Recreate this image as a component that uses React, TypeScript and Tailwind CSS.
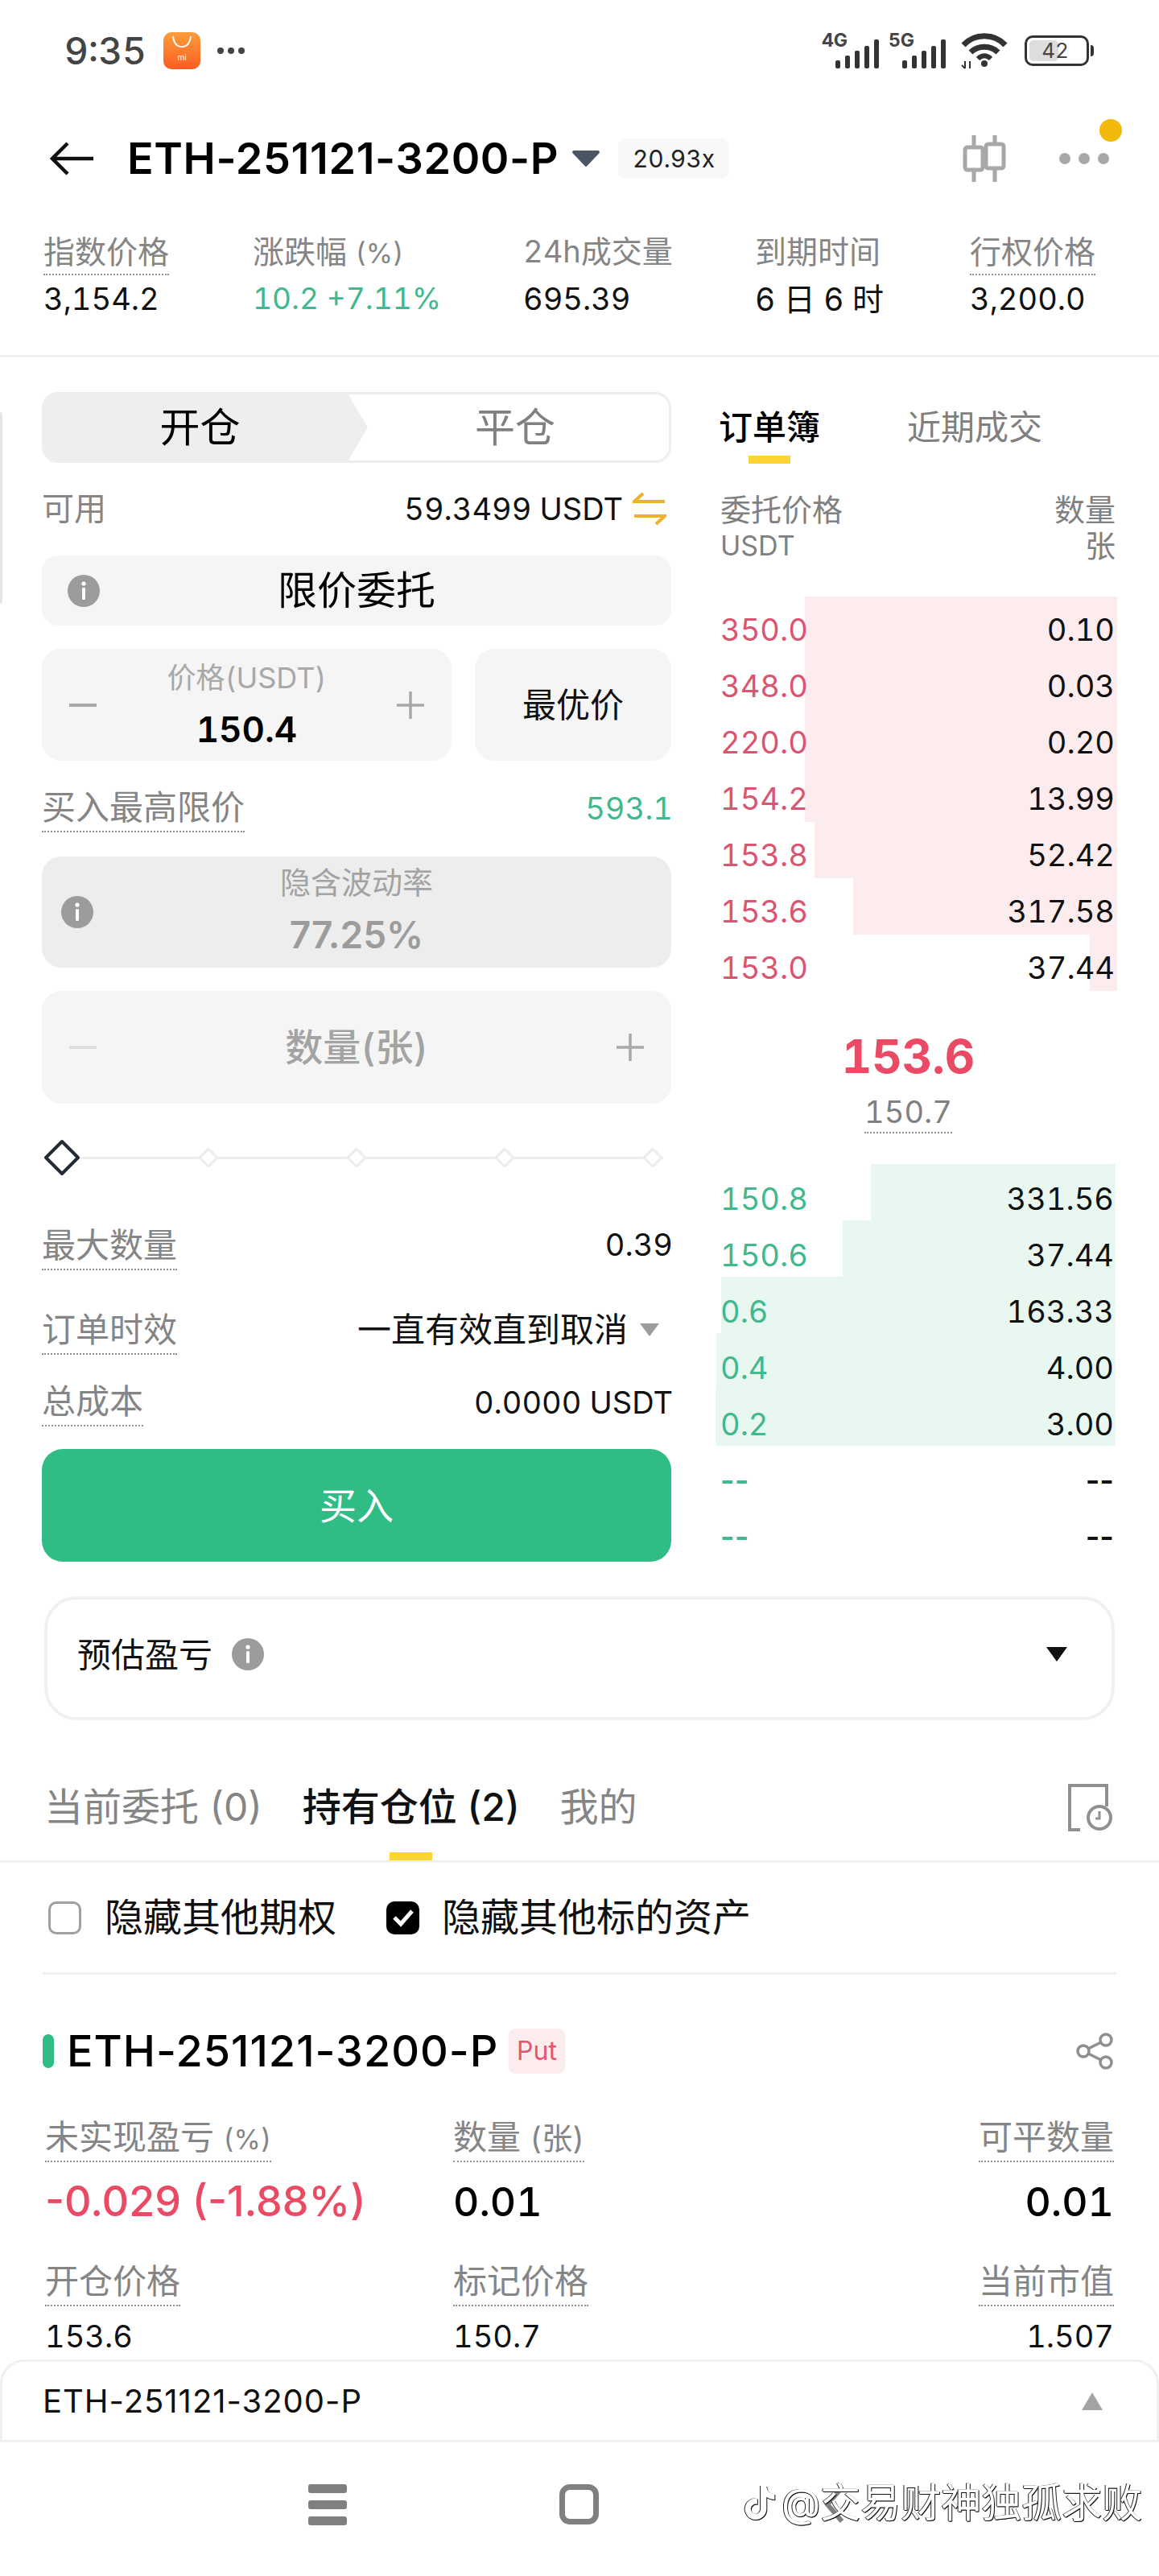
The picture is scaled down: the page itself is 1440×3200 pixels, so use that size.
import React from "react";
import { FaTiktok } from "react-icons/fa";

const asks = [
  { price: "350.0", qty: "0.10", bar: 388 },
  { price: "348.0", qty: "0.03", bar: 388 },
  { price: "220.0", qty: "0.20", bar: 388 },
  { price: "154.2", qty: "13.99", bar: 388 },
  { price: "153.8", qty: "52.42", bar: 376 },
  { price: "153.6", qty: "317.58", bar: 328 },
  { price: "153.0", qty: "37.44", bar: 34 },
];

const bids = [
  { price: "150.8", qty: "331.56", bar: 304 },
  { price: "150.6", qty: "37.44", bar: 339 },
  { price: "0.6", qty: "163.33", bar: 490 },
  { price: "0.4", qty: "4.00", bar: 496 },
  { price: "0.2", qty: "3.00", bar: 497 },
  { price: "--", qty: "--", bar: 0 },
  { price: "--", qty: "--", bar: 0 },
];

const DottedLabel = ({ text, size = "text-[42px]" }: { text: React.ReactNode; size?: string }) => (
  <span className={`inline-block ${size} leading-none pb-[8px] text-[#858585] border-b-2 border-dotted border-[#8f8f8f] whitespace-nowrap`}>
    {text}
  </span>
);

const InfoIcon = ({ size = 40 }: { size?: number }) => (
  <svg width={size} height={size} viewBox="0 0 40 40" className="shrink-0">
    <circle cx="20" cy="20" r="20" fill="#9c9c9c" />
    <circle cx="20" cy="11" r="2.6" fill="#fff" />
    <rect x="18" y="16" width="4" height="15" rx="1.5" fill="#fff" />
  </svg>
);

const Signal = () => (
  <svg width="56" height="36" viewBox="0 0 56 36">
    <rect x="0" y="26" width="6" height="10" rx="2" fill="#333" />
    <rect x="12" y="20" width="6" height="16" rx="2" fill="#333" />
    <rect x="24" y="14" width="6" height="22" rx="2" fill="#333" />
    <rect x="36" y="8" width="6" height="28" rx="2" fill="#333" />
    <rect x="48" y="0" width="6" height="36" rx="2" fill="#333" />
  </svg>
);

const StatusBar = () => (
  <div className="h-[126px] flex items-center pl-[80px] pr-[81px] text-[#444]">
    <span className="text-[46px] leading-none font-medium w-[123px]">9:35</span>
    <div className="w-[46px] h-[46px] rounded-[10px] bg-gradient-to-b from-[#fb9d3a] to-[#fb5a22] flex flex-col items-center pt-[3px]">
      <svg width="28" height="18" viewBox="0 0 28 18">
        <path d="M3 2c1 9 5 13 11 13s10-4 11-13" fill="none" stroke="#fff" strokeWidth="2" />
      </svg>
      <span className="text-[10px] leading-none mt-[5px] text-white">mi</span>
    </div>
    <div className="flex gap-[5px] ml-[21px]">
      <span className="w-[8px] h-[8px] rounded-full bg-[#444]" />
      <span className="w-[8px] h-[8px] rounded-full bg-[#444]" />
      <span className="w-[8px] h-[8px] rounded-full bg-[#444]" />
    </div>
    <div className="ml-auto flex items-center">
      <div className="relative w-[73px] h-[44px] flex items-end justify-end">
        <span className="absolute left-0 top-[-2px] text-[23px] leading-none font-bold">4G</span>
        <Signal />
      </div>
      <div className="relative w-[73px] h-[44px] flex items-end justify-end ml-[10px]">
        <span className="absolute left-0 top-[-2px] text-[23px] leading-none font-bold">5G</span>
        <Signal />
      </div>
      <svg width="60" height="46" viewBox="0 0 60 46" className="ml-[16px]">
        <path d="M4 16c14-15 38-15 52 0" fill="none" stroke="#333" strokeWidth="7" />
        <path d="M13 25c9-9 25-9 34 0" fill="none" stroke="#333" strokeWidth="7" />
        <path d="M22 33c5-5 11-5 16 0" fill="none" stroke="#333" strokeWidth="6" />
        <circle cx="30" cy="39" r="4" fill="#333" />
        <path d="M6 36v9M2 41l4 4M12 45v-9" stroke="#333" strokeWidth="2" fill="none" />
      </svg>
      <div className="ml-[20px] flex items-center">
        <div className="w-[80px] h-[38px] rounded-[10px] border-[3px] border-[#333] p-[3px] relative">
          <div className="w-[36px] h-full rounded-[5px] bg-[#ddd]" />
          <span className="absolute inset-0 flex items-center justify-center text-[26px] leading-none pr-[4px]">42</span>
        </div>
        <div className="w-[4px] h-[14px] rounded-r-full bg-[#333] ml-[2px]" />
      </div>
    </div>
  </div>
);

const TitleBar = () => (
  <div className="h-[100px] mt-[21px] flex items-center pl-[62px]">
    <svg width="54" height="42" viewBox="0 0 54 42" className="shrink-0">
      <path d="M22 2 3 21l19 19M3 21h51" fill="none" stroke="#111" strokeWidth="4.5" />
    </svg>
    <span className="ml-[42px] w-[534px] text-[54px] leading-none font-semibold text-black whitespace-nowrap normal-nums tracking-[0.6px]">ETH-251121-3200-P</span>
    <svg width="34" height="20" viewBox="0 0 34 20" className="ml-[19px] shrink-0">
      <path d="M2 0h30a2 2 0 0 1 1.5 3.2L18.5 19a2 2 0 0 1-3 0L.5 3.2A2 2 0 0 1 2 0Z" fill="#4b5563" />
    </svg>
    <span className="ml-[23px] w-[138px] h-[50px] rounded-[10px] bg-[#f8f8f8] flex items-center justify-center text-[30px] leading-none text-[#222]">20.93x</span>
    <svg width="54" height="58" viewBox="0 0 54 58" className="ml-[290px] shrink-0">
      <path d="M14 0v58M40 0v58" stroke="#a8a8a8" strokeWidth="5" />
      <rect x="3" y="15" width="22" height="28" rx="3" fill="#fff" stroke="#a8a8a8" strokeWidth="5" />
      <rect x="29" y="11" width="22" height="30" rx="3" fill="#fff" stroke="#a8a8a8" strokeWidth="5" />
    </svg>
    <div className="relative ml-[66px] flex gap-[10px]">
      <span className="w-[14px] h-[14px] rounded-full bg-[#a8a8a8]" />
      <span className="w-[14px] h-[14px] rounded-full bg-[#a8a8a8]" />
      <span className="w-[14px] h-[14px] rounded-full bg-[#a8a8a8]" />
      <span className="absolute left-[50px] top-[-42px] w-[28px] h-[28px] rounded-full bg-[#f0b90b]" />
    </div>
  </div>
);

const StatsRow = () => (
  <div className="h-[197px] pl-[54px] pt-[46px] border-b-[3px] border-[#f0f0f0] flex">
    <div className="w-[260px]">
      <DottedLabel text="指数价格" size="text-[39px]" />
      <div className="text-[38px] leading-none mt-[10px] text-[#111]">3,154.2</div>
    </div>
    <div className="w-[336px]">
      <span className="text-[39px] leading-none text-[#858585] block">涨跌幅 <span className="text-[34px]">(%)</span></span>
      <div className="text-[37px] leading-none mt-[20px] text-[#41b88d]">10.2 +7.11%</div>
    </div>
    <div className="w-[288px]">
      <span className="text-[38px] leading-none text-[#858585] block">24h成交量</span>
      <div className="text-[38px] leading-none mt-[21px] text-[#111]">695.39</div>
    </div>
    <div className="w-[267px]">
      <span className="text-[39px] leading-none text-[#858585] block">到期时间</span>
      <div className="text-[39px] leading-none mt-[20px] text-[#111]">6 日 6 时</div>
    </div>
    <div>
      <DottedLabel text="行权价格" size="text-[39px]" />
      <div className="text-[38px] leading-none mt-[10px] text-[#111]">3,200.0</div>
    </div>
  </div>
);

const OrderForm = () => (
  <div className="w-[782px] ml-[52px] pt-[43px] shrink-0">
    <div className="h-[88px] rounded-[20px] border-[3px] border-[#eee] overflow-hidden flex text-[50px] bg-white">
      <div className="w-[405px] -ml-[3px] -my-[3px] bg-[#eee] flex items-center justify-center text-black pr-[12px] [clip-path:polygon(0_0,calc(100%-26px)_0,100%_50%,calc(100%-26px)_100%,0_100%)]">开仓</div>
      <div className="flex-1 flex items-center justify-center text-[#808080] pr-[8px]">平仓</div>
    </div>

    <div className="h-[60px] mt-[27px] flex items-center justify-between">
      <span className="text-[40px] text-[#858585]">可用</span>
      <div className="flex items-center gap-[12px] pr-[6px]">
        <span className="text-[38px] text-[#111]">59.3499 USDT</span>
        <svg width="42" height="42" viewBox="0 0 42 42">
          <path d="M13 2 2 12h38M29 40l11-10H2" fill="none" stroke="#ecb22e" strokeWidth="4" />
        </svg>
      </div>
    </div>

    <div className="h-[87px] mt-[28px] rounded-[20px] bg-[#f5f5f5] flex items-center pl-[32px] relative">
      <InfoIcon />
      <span className="absolute inset-0 flex items-center justify-center text-[49px] text-black">限价委托</span>
    </div>

    <div className="mt-[29px] flex gap-[29px]">
      <div className="w-[509px] h-[139px] rounded-[24px] bg-[#f5f5f5] flex items-center px-[34px]">
        <span className="w-[34px] h-[4px] bg-[#a8a8a8]" />
        <div className="flex-1 flex flex-col items-center">
          <span className="text-[36px] leading-[36px] text-[#a8a8a8]">价格(USDT)</span>
          <span className="text-[44px] leading-[44px] font-semibold text-black mt-[24px]">150.4</span>
        </div>
        <svg width="34" height="34" viewBox="0 0 34 34">
          <path d="M0 17h34M17 0v34" stroke="#a8a8a8" strokeWidth="3.5" />
        </svg>
      </div>
      <div className="flex-1 h-[139px] rounded-[24px] bg-[#f5f5f5] flex items-center justify-center text-[42px] text-[#111]">最优价</div>
    </div>

    <div className="h-[54px] mt-[37px] -mr-[2px] flex items-start justify-between">
      <DottedLabel text="买入最高限价" />
      <span className="text-[38px] leading-[44px] text-[#41b88d]">593.1</span>
    </div>

    <div className="h-[138px] mt-[28px] rounded-[24px] bg-[#ededed] flex items-center pl-[24px] relative">
      <InfoIcon />
      <div className="absolute inset-0 flex flex-col items-center pt-[13px]">
        <span className="text-[38px] leading-[38px] text-[#a3a3a3]">隐含波动率</span>
        <span className="text-[46px] leading-[46px] font-semibold text-[#9c9c9c] mt-[23px] normal-nums">77.25%</span>
      </div>
    </div>

    <div className="h-[140px] mt-[29px] rounded-[24px] bg-[#f5f5f5] flex items-center justify-between px-[34px]">
      <span className="w-[34px] h-[4px] bg-[#dedede]" />
      <span className="text-[47px] font-medium text-[#a3a3a3]">数量(张)</span>
      <svg width="34" height="34" viewBox="0 0 34 34">
        <path d="M0 17h34M17 0v34" stroke="#a8a8a8" strokeWidth="3.5" />
      </svg>
    </div>

    <div className="h-[44px] mt-[45px] flex items-center relative">
      <div className="absolute left-[20px] right-[10px] h-[3px] bg-[#eeeeee]" />
      <svg width="46" height="46" viewBox="0 0 46 46" className="relative ml-[2px]">
        <path d="M23 3 43 23 23 43 3 23Z" fill="#fff" stroke="#222b35" strokeWidth="4" strokeLinejoin="round" />
      </svg>
      {[1, 2, 3, 4].map((i) => (
        <svg key={i} width="26" height="26" viewBox="0 0 26 26" className={i === 1 ? "relative ml-[146px]" : "relative ml-[158px]"}>
          <path d="M13 2 24 13 13 24 2 13Z" fill="#fff" stroke="#eaecef" strokeWidth="3" strokeLinejoin="round" />
        </svg>
      ))}
    </div>

    <div className="h-[54px] mt-[66px] -mr-[2px] flex items-start justify-between">
      <DottedLabel text="最大数量" />
      <span className="text-[38px] leading-[40px] text-[#111]">0.39</span>
    </div>

    <div className="h-[54px] mt-[51px] flex items-start justify-between">
      <DottedLabel text="订单时效" />
      <div className="flex items-center gap-[14px] pr-[14px]">
        <span className="text-[42px] leading-[42px] text-[#111]">一直有效直到取消</span>
        <svg width="26" height="16" viewBox="0 0 26 16">
          <path d="M1 0h24L13 16Z" fill="#9c9c9c" />
        </svg>
      </div>
    </div>

    <div className="h-[54px] mt-[35px] -mr-[2px] flex items-start justify-between">
      <DottedLabel text="总成本" />
      <span className="text-[38px] leading-[44px] text-[#111]">0.0000 USDT</span>
    </div>

    <div className="h-[140px] mt-[26px] rounded-[26px] bg-[#2fbd85] flex items-center justify-center text-[46px] text-white">买入</div>
  </div>
);

const OrderBook = () => (
  <div className="w-[499px] ml-[55px] pt-[61px] shrink-0">
    <div className="flex pl-[4px] h-[71px]">
      <div className="flex flex-col items-center w-[126px]">
        <span className="text-[42px] leading-[52px] font-medium text-black">订单簿</span>
        <span className="w-[52px] h-[10px] bg-[#fcd535] mt-[9px]" />
      </div>
      <span className="text-[42px] leading-[52px] text-[#808080] ml-[108px]">近期成交</span>
    </div>
    <div className="flex justify-between pl-[6px] pr-[2px] mt-[35px] text-[#808080]">
      <div>
        <div className="text-[38px] leading-[44px]">委托价格</div>
        <div className="text-[34px] leading-[46px]">USDT</div>
      </div>
      <div className="text-right">
        <div className="text-[38px] leading-[44px]">数量</div>
        <div className="text-[38px] leading-[46px]">张</div>
      </div>
    </div>
    <div className="mt-[40px]">
      {asks.map((row) => (
        <div key={row.price} className="h-[70px] relative flex items-center justify-between pl-[6px] pr-[3px] pt-[12px] text-[38px] leading-none">
          <div className="absolute right-0 top-0 bottom-0 bg-[#fdecee]" style={{ width: row.bar }} />
          <span className="relative text-[#dc5570]">{row.price}</span>
          <span className="relative text-[#111]">{row.qty}</span>
        </div>
      ))}
    </div>
    <div className="h-[215px] flex flex-col items-center pt-[55px] pr-[20px]">
      <span className="text-[58px] leading-[52px] font-bold text-[#ea4a64]">153.6</span>
      <span className="text-[38px] leading-none pb-[6px] mt-[24px] text-[#808080] border-b-2 border-dotted border-[#8f8f8f]">150.7</span>
    </div>
    {bids.map((row, i) => (
      <div key={i} className={`h-[70px] relative flex items-center justify-between pl-[6px] pr-[4px] pt-[16px] text-[38px] leading-none ${row.bar === 0 ? "normal-nums font-semibold" : ""}`}>
        <div className="absolute right-[2px] top-0 bottom-0 bg-[#e8f7f0]" style={{ width: row.bar }} />
        <span className="relative text-[#41b88d]">{row.price}</span>
        <span className="relative text-[#111]">{row.qty}</span>
      </div>
    ))}
  </div>
);

const PositionCell = ({ label, value, valueClass, align }: { label: React.ReactNode; value: string; valueClass?: string; align?: string }) => (
  <div className={align}>
    <DottedLabel text={label} />
    <div className={valueClass}>{value}</div>
  </div>
);

const PositionsPanel = () => (
  <div>
    <div className="h-[177px] border-b-[3px] border-[#f0f0f0] flex items-start pl-[55px] pr-[58px] pt-[78px]">
      <div className="flex gap-[50px] text-[48px] leading-[60px] normal-nums">
        <span className="text-[#858585]">当前委托 (0)</span>
        <div className="flex flex-col items-center">
          <span className="text-[#111] font-medium">持有仓位 (2)</span>
          <span className="w-[53px] h-[10px] bg-[#fcd535] mt-[26px]" />
        </div>
        <span className="text-[#858585]">我的</span>
      </div>
      <svg width="56" height="60" viewBox="0 0 56 60" className="ml-auto">
        <path d="M16 58H3V3h46v26" fill="none" stroke="#909090" strokeWidth="4" />
        <circle cx="40" cy="43" r="14" fill="#fff" stroke="#909090" strokeWidth="4" />
        <path d="M40 35v9h-5" fill="none" stroke="#909090" strokeWidth="3" />
      </svg>
    </div>

    <div className="h-[139px] mx-[53px] border-b-[3px] border-[#f0f0f0] flex items-center text-[48px] text-[#111]">
      <span className="w-[41px] h-[41px] rounded-[10px] border-[3px] border-[#a0a0a0] ml-[7px]" />
      <span className="ml-[29px]">隐藏其他期权</span>
      <span className="w-[41px] h-[41px] rounded-[10px] bg-black ml-[62px] flex items-center justify-center">
        <svg width="28" height="24" viewBox="0 0 28 24">
          <path d="m3 12 8 8L25 4" fill="none" stroke="#fff" strokeWidth="5" />
        </svg>
      </span>
      <span className="ml-[28px]">隐藏其他标的资产</span>
    </div>

    <div className="mt-[67px] h-[56px] mx-[53px] flex items-center">
      <span className="w-[14px] h-[42px] rounded-full bg-[#2fbd85]" />
      <span className="ml-[16px] w-[532px] text-[54px] leading-none font-medium text-black whitespace-nowrap normal-nums tracking-[1px]">ETH-251121-3200-P</span>
      <span className="ml-[17px] w-[70px] h-[56px] rounded-[8px] bg-[#fdecee] flex items-center justify-center text-[32px] text-[#e2566f]">Put</span>
      <svg width="48" height="46" viewBox="0 0 48 46" className="ml-auto mr-[3px]">
        <circle cx="38" cy="9" r="7" fill="none" stroke="#8f8f8f" strokeWidth="3.5" />
        <circle cx="38" cy="37" r="7" fill="none" stroke="#8f8f8f" strokeWidth="3.5" />
        <circle cx="10" cy="23" r="7" fill="none" stroke="#8f8f8f" strokeWidth="3.5" />
        <path d="M32 12 16 20M32 34 16 26" stroke="#8f8f8f" strokeWidth="3.5" />
      </svg>
    </div>

    <div className="mt-[58px] px-[56px] flex">
      <PositionCell
        label={<>未实现盈亏 <span className="text-[34px]">(%)</span></>}
        value="-0.029 (-1.88%)"
        align="w-[507px]"
        valueClass="text-[52px] leading-[56px] font-medium text-[#ea4a64] mt-[21px] normal-nums"
      />
      <PositionCell label={<>数量 <span className="text-[38px]">(张)</span></>} value="0.01" align="flex-1" valueClass="text-[50px] leading-[56px] font-medium text-black mt-[21px]" />
      <PositionCell label="可平数量" value="0.01" align="text-right" valueClass="text-[50px] leading-[56px] font-medium text-black mt-[21px]" />
    </div>

    <div className="mt-[50px] px-[56px] flex">
      <PositionCell label="开仓价格" value="153.6" align="w-[507px]" valueClass="text-[38px] leading-[44px] text-[#111] mt-[15px]" />
      <PositionCell label="标记价格" value="150.7" align="flex-1" valueClass="text-[38px] leading-[44px] text-[#111] mt-[15px]" />
      <PositionCell label="当前市值" value="1.507" align="text-right" valueClass="text-[38px] leading-[44px] text-[#111] mt-[15px]" />
    </div>
  </div>
);

const BottomBars = () => (
  <div className="mt-[7px]">
    <div className="h-[103px] bg-white rounded-t-[30px] border-[3px] border-[#f0f0f0] flex items-center justify-between pl-[50px] pr-[67px]">
      <span className="text-[40px] leading-none text-[#111] normal-nums tracking-[1px]">ETH-251121-3200-P</span>
      <svg width="26" height="22" viewBox="0 0 26 22">
        <path d="M13 0 26 22H0Z" fill="#a3a3a3" />
      </svg>
    </div>
    <div className="h-[160px] flex items-center pl-[383px] pb-[6px] relative">
      <div className="flex flex-col gap-[9px]">
        <span className="w-[48px] h-[11px] rounded-[3px] bg-[#808080]" />
        <span className="w-[48px] h-[11px] rounded-[3px] bg-[#808080]" />
        <span className="w-[48px] h-[11px] rounded-[3px] bg-[#808080]" />
      </div>
      <span className="w-[49px] h-[50px] rounded-[13px] border-[7px] border-[#808080] ml-[264px]" />
      <svg width="26" height="48" viewBox="0 0 26 48" className="ml-[280px]">
        <path d="M22 3 4 24l18 21" fill="none" stroke="#808080" strokeWidth="6" />
      </svg>
      <div className="absolute left-[923px] top-[50px] flex items-center text-white [filter:drop-shadow(1px_1px_0_#111)_drop-shadow(-1px_0_0_#222)]">
        <FaTiktok size={42} />
        <span className="text-[50px] leading-none ml-[6px]">@交易财神独孤求败</span>
      </div>
    </div>
  </div>
);

export default function App() {
  return (
    <div className="relative w-[1440px] h-[3200px] overflow-hidden bg-white tabular-nums font-['Inter','Noto_Sans_CJK_SC',sans-serif]">
      <StatusBar />
      <TitleBar />
      <StatsRow />
      <div className="absolute left-0 top-[512px] w-[3px] h-[238px] rounded-r-full bg-[#e5e5e5]" />
      <div className="flex">
        <OrderForm />
        <OrderBook />
      </div>
      <div className="h-[154px] mx-[55px] mt-[43px] rounded-[40px] border-[4px] border-[#f0f0f0] flex items-center pl-[37px] pr-[54px] pb-[10px]">
        <span className="text-[42px] text-[#111]">预估盈亏</span>
        <span className="ml-[24px]">
          <InfoIcon />
        </span>
        <svg width="28" height="18" viewBox="0 0 28 18" className="ml-auto">
          <path d="M1 0h26L14 18Z" fill="#111" />
        </svg>
      </div>
      <PositionsPanel />
      <BottomBars />
    </div>
  );
}
